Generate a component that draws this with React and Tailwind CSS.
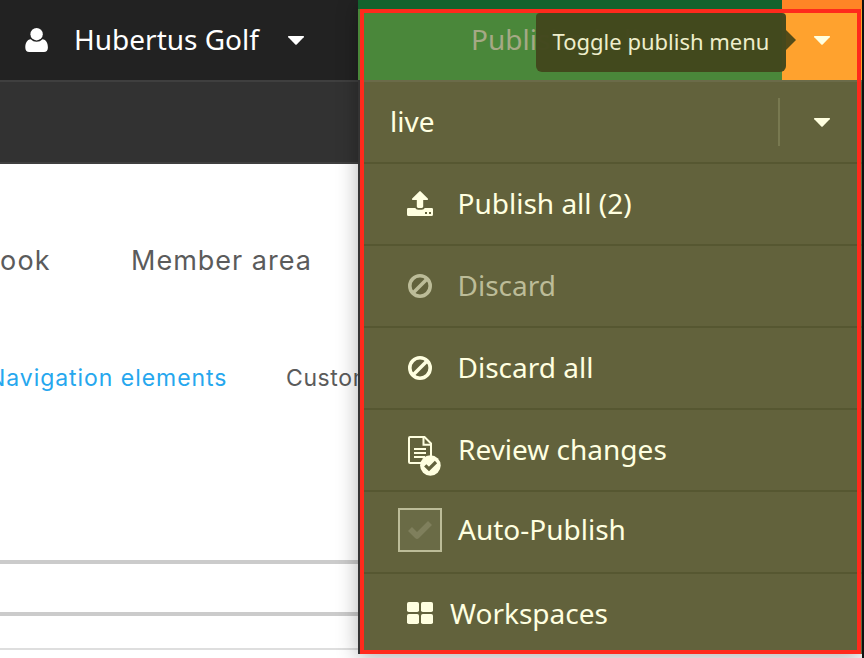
import React from "react";

const Caret = ({ className = "" }) => (
  <svg width="16" height="9" viewBox="0 0 16 9" className={`block shrink-0 ${className}`} fill="currentColor">
    <path d="M0.3 0H15.7Q16.2 .6 15.7 1.2L8.7 8.4Q8 9 7.3 8.4L.3 1.2Q-.2 .6 .3 0Z" />
  </svg>
);

const UserIcon = () => (
  <svg width="24" height="26" viewBox="0 0 24 26" className="block shrink-0" fill="currentColor">
    <circle cx="11.6" cy="7.2" r="6.2" />
    <path d="M5.8 12.2C7.3 13.9 9.3 14.7 11.6 14.7S15.9 13.9 17.4 12.2C21.4 12.5 22.9 16.2 22.9 20.7C22.9 23.5 21.3 25 19 25H4.2C1.9 25 .3 23.5 .3 20.7C.3 16.2 1.8 12.5 5.8 12.2Z" />
  </svg>
);

const UploadIcon = () => (
  <svg width="26" height="25" viewBox="0 0 26 25" className="mb-0.5 block" fill="currentColor">
    <path d="M12.3.4Q13 -.3 13.7.4L20.8 7.5Q21.6 8.9 20.2 9.1H16.2V15.6Q16.2 17 14.8 17H11.2Q9.8 17 9.8 15.6V9.1H5.8Q4.4 8.9 5.2 7.5Z" />
    <path fillRule="evenodd" d="M1.2 17H8.3Q8.9 18.7 11.2 18.7H14.8Q17.1 18.7 17.7 17H24.8Q26 17 26 18.2V23.5Q26 25 24.5 25H1.5Q0 25 0 23.5V18.2Q0 17 1.2 17ZM18 20.9V22.9H20V20.9ZM22 20.9V22.9H24V20.9Z" />
  </svg>
);

const BanIcon = () => (
  <svg width="24" height="24" viewBox="0 0 24 24" className="block" fill="none" stroke="currentColor" strokeWidth="3.6">
    <circle cx="12" cy="12" r="10.2" />
    <path d="M5 19L19 5" />
  </svg>
);

const ReviewIcon = () => (
  <svg width="34" height="40" viewBox="0 0 34 40" className="block" fill="none" stroke="currentColor" strokeWidth="2">
    <path d="M2 1H16.5L23 7.5V26Q23 27 22 27H2Q1 27 1 26V2Q1 1 2 1Z" />
    <path d="M15.5 1V8.7H23" />
    <path d="M6 13H18M6 17H18M6 21H17" />
    <circle cx="22.4" cy="29.5" r="10.3" fill="currentColor" stroke="none" />
    <path d="M17.2 29.3L21 33L28 26" stroke="#62623c" strokeWidth="3.2" />
  </svg>
);

const GridIcon = () => (
  <svg width="26" height="22" viewBox="0 0 26 22" className="block" fill="currentColor">
    <rect width="12" height="10" rx="1.8" />
    <rect x="14" width="12" height="10" rx="1.8" />
    <rect y="12" width="12" height="10" rx="1.8" />
    <rect x="14" y="12" width="12" height="10" rx="1.8" />
  </svg>
);

const CheckBox = () => (
  <span className="mb-1 flex size-11 items-center justify-center border-2 border-[#bcbc98] bg-[#6a6b46] text-[#7f7f5c]">
    <svg width="24" height="20" viewBox="0 0 24 20" className="block" fill="none" stroke="currentColor" strokeWidth="5.6" strokeLinejoin="round">
      <path d="M2 9L9 16L22 3" />
    </svg>
  </span>
);

const Row = ({ icon, children, muted, last, text = "ml-[9.5px] mb-0.5" }) => (
  <li
    className={`flex h-[82px] items-center pl-8 ${last ? "" : "border-b-2 border-[#565731]"} ${
      muted ? "text-[#bcbc98]" : "text-[#ffffe0]"
    }`}
  >
    <span className="flex w-14 shrink-0 justify-center">{icon}</span>
    <span className={`whitespace-nowrap ${text}`}>{children}</span>
  </li>
);

export default function App() {
  return (
    <div className="relative flex h-[658px] w-[864px] overflow-hidden bg-white font-['Noto_Sans',sans-serif] text-[28px] leading-[38px]">
      <main className="w-[358px] shrink-0 overflow-hidden">
        <header className="flex h-20 items-center bg-[#222] pl-[25px] text-white">
          <UserIcon />
          <span className="mb-0.5 ml-[25px] w-[214px] whitespace-nowrap">Hubertus Golf</span>
          <Caret />
        </header>
        <div className="h-[84px] border-y-2 border-[#3f3f3f] bg-[#323232]" />
        <nav className="mt-[77px] flex h-10 items-center whitespace-nowrap font-[Inter,sans-serif] text-[27px] text-[#5b5b5b]">
          <span className="w-[131px] shrink-0 tracking-[1.2px]">ook</span>
          <span className="tracking-[1px]">Member area</span>
        </nav>
        <nav className="mt-[77px] flex h-10 items-center whitespace-nowrap font-[Inter,sans-serif] text-[23px]">
          <span className="-ml-3 w-[298px] shrink-0 tracking-[0.95px] text-[#26a7ee]">Navigation elements</span>
          <span className="tracking-[0.6px] text-[#5b5b5b]">Customer</span>
        </nav>
        <div className="mt-[162px] h-14 border-y-4 border-[#cbcbcb]" />
        <div className="h-[34px] border-b-2 border-[#dedede]" />
      </main>

      <section className="relative h-[654px] w-[504px] shrink-0 border-l-2 border-[#333] bg-[#62623c] shadow-[0_4px_20px_rgba(0,0,0,0.3)]">
        <div className="-ml-0.5 flex h-20 border-t-[9px] border-[#13622d] bg-[#4a873a]">
          <span className="-mt-[11px] flex w-[424px] items-center pl-[113px] text-[#a5a985]">Published - live</span>
          <span className="-mt-[9px] flex flex-1 items-center justify-center border-t-[9px] border-[#ff8526] bg-[#ffa22e] pb-[9px] text-[#ffffe0]">
            <Caret />
          </span>
        </div>
        <div className="flex h-[84px] items-center border-y-2 border-t-[#6b6b49] border-b-[#565731] pl-[30px] text-[#ffffe0]">
          <span className="mb-0.5 flex-1">live</span>
          <span className="flex h-12 w-[84px] items-center border-l-2 border-[#787950] pl-[34px]">
            <Caret />
          </span>
        </div>
        <ul>
          <Row icon={<UploadIcon />}>Publish all (2)</Row>
          <Row icon={<BanIcon />} muted>Discard</Row>
          <Row icon={<BanIcon />}>Discard all</Row>
          <Row icon={<span className="ml-[9px] mt-[11px]"><ReviewIcon /></span>} text="ml-2.5 mb-0.5">Review changes</Row>
          <Row icon={<CheckBox />} text="ml-2.5 mb-[7px]">Auto-Publish</Row>
          <Row icon={<span className="mb-1"><GridIcon /></span>} text="ml-0.5 mb-1" last>Workspaces</Row>
        </ul>
      </section>
      <aside className="h-full w-0.5 bg-[#111]" />

      <div className="absolute left-[536px] top-[13px] flex h-[59px] w-[250px] items-center justify-center rounded-b-md rounded-t-sm bg-[#42471d]/98 pb-[3px] text-[22px] text-[#eeeecb]">
        <span className="whitespace-nowrap">Toggle publish menu</span>
        <svg width="10" height="20" viewBox="0 0 10 20" className="absolute left-full top-[17px]">
          <path d="M0 0L10 10L0 20Z" fill="#544b18" />
        </svg>
      </div>
      <div className="absolute left-[360px] top-[9px] h-[645px] w-[501px] border-4 border-[#ff2a1c]" />
    </div>
  );
}
